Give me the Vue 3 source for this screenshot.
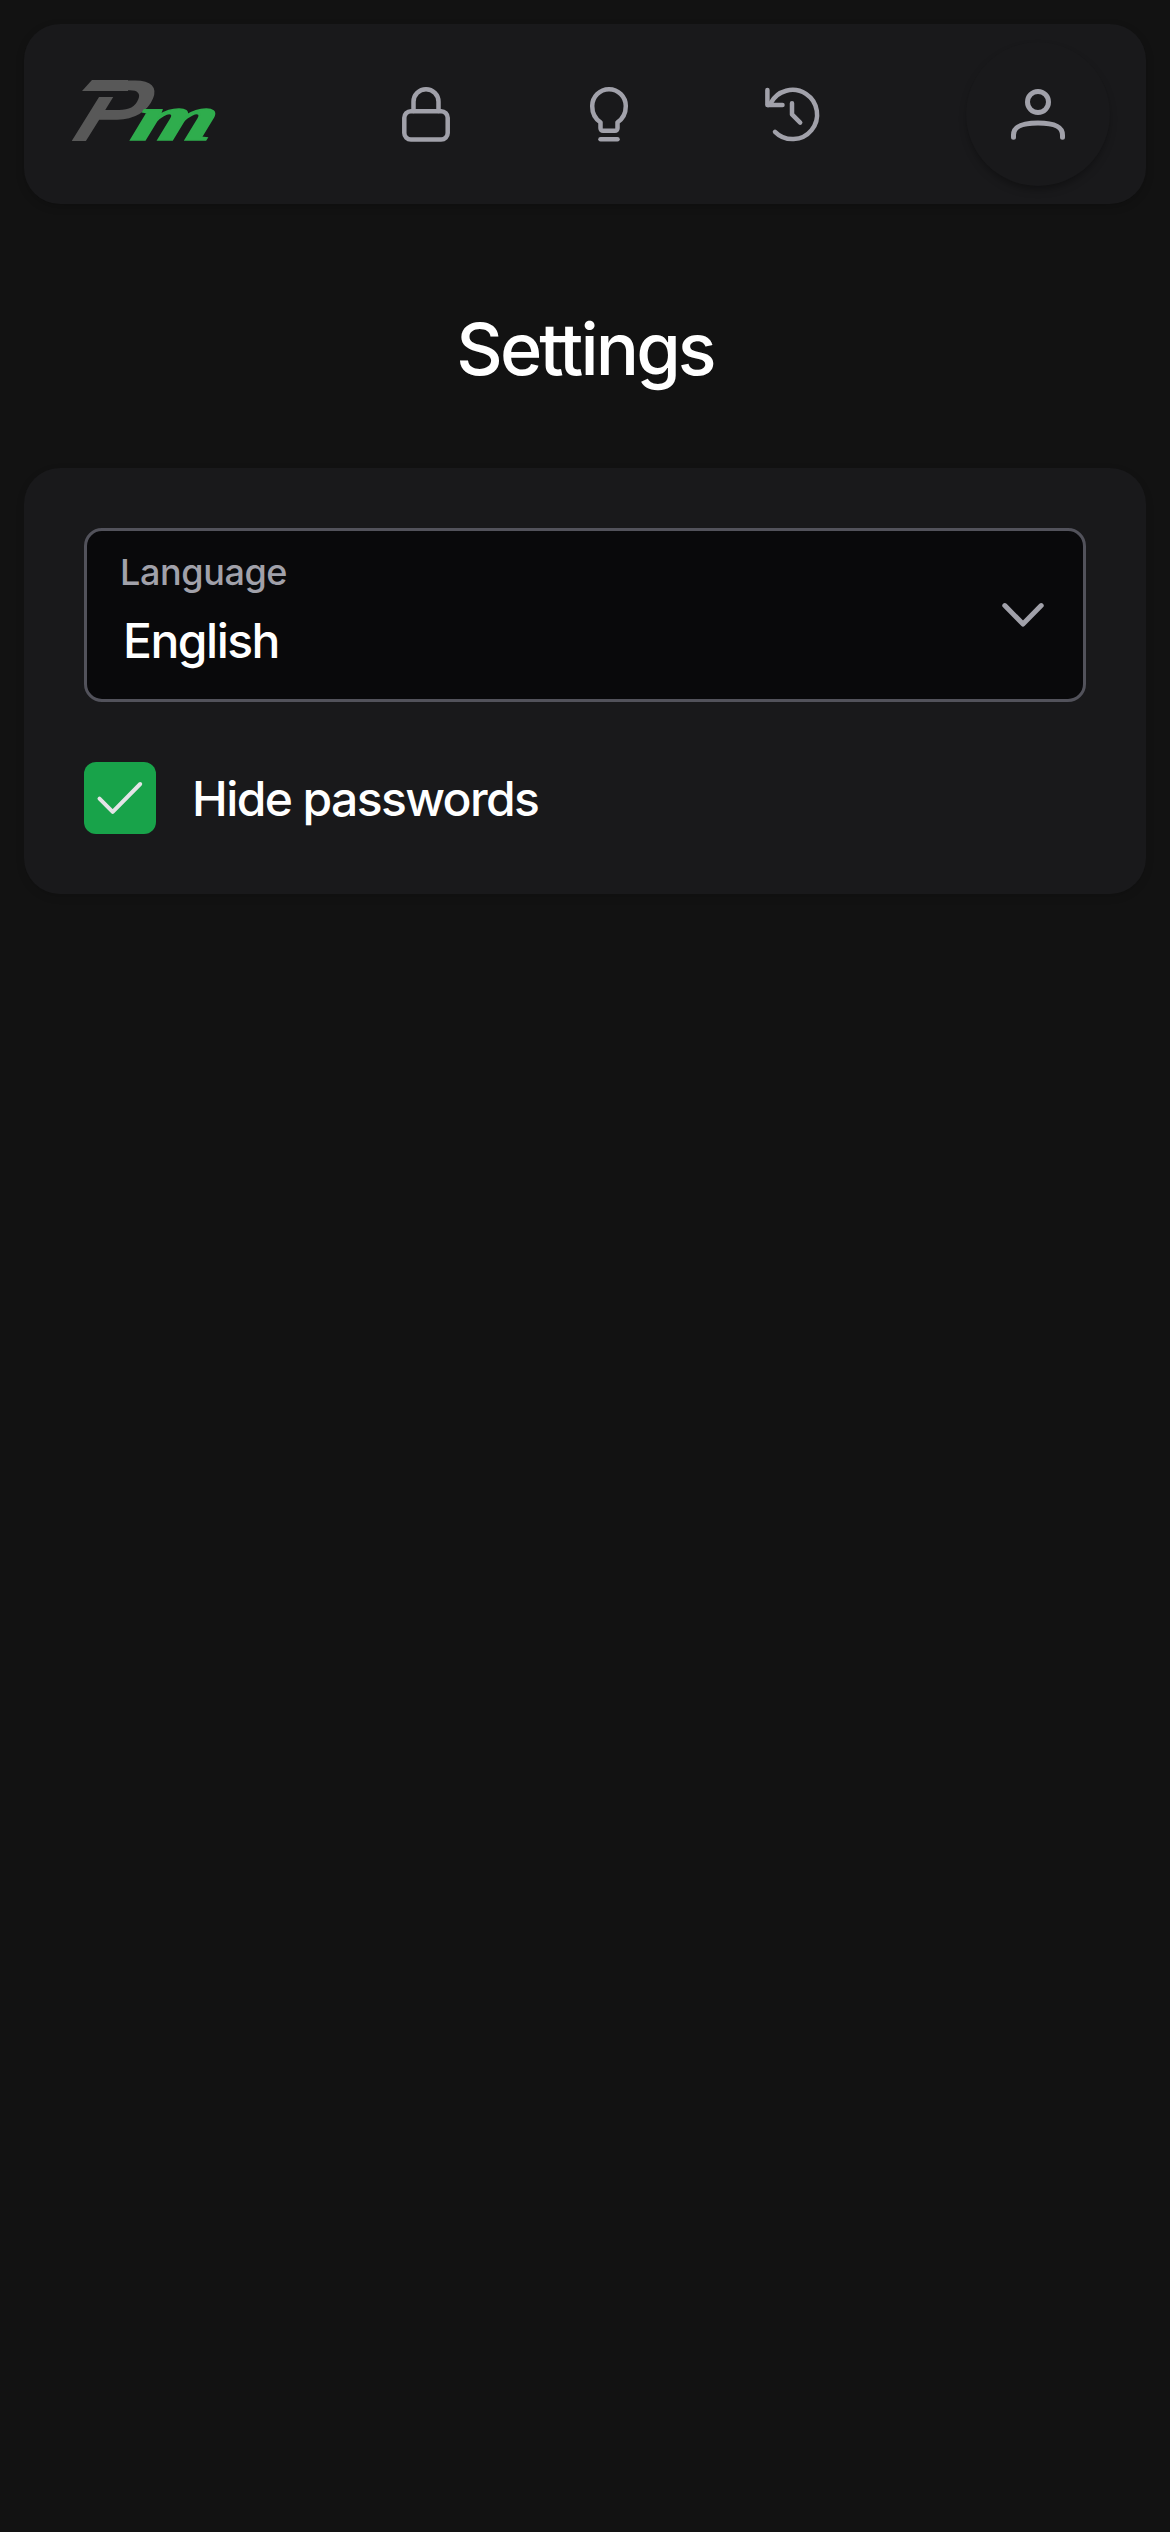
<script setup>
import { ref } from 'vue'

const hidePasswords = ref(true)
const language = ref('English')
</script>

<template>
  <div class="page">
    <header class="navbar">
      <svg class="logo" viewBox="0 0 150 66" aria-label="Pm">
        <text class="logo-p" transform="translate(-2 62.500) skewX(-22) scale(1.120 1)" x="0" y="0">P</text>
        <path class="logo-gap" d="M10 13H53V19H10Z" />
        <path class="logo-bar" d="M20 2H56V13H10Z" />
        <text class="logo-m" transform="translate(57 62) skewX(-18) scale(1.600 1)" x="0" y="0">m</text>
      </svg>
      <nav class="links">
        <svg class="icon" viewBox="0 0 60 60">
          <path d="M17.5 27V17.8a12.5 12.5 0 0 1 25 0V27" />
          <rect x="8.3" y="27.2" width="43.4" height="28.3" rx="6.6" />
        </svg>
        <svg class="icon" viewBox="0 0 60 60">
          <path d="M21.500 38.300C16.500 35 13.200 29 13.200 22a16.800 16.800 0 0 1 33.600 0c0 7-3.300 13-8.300 16.300V44.300a2.500 2.500 0 0 1-2.500 2.500H24a2.500 2.500 0 0 1-2.500-2.500Z" />
          <path d="M21.500 55.300H38.500" />
        </svg>
        <svg class="icon" viewBox="0 0 60 60">
          <path d="M5.400 5.900V21.100H20.500" />
          <path d="M6 21L8.600 19.300A24.600 24.600 0 1 1 13 47.800" />
          <path d="M30 19.200V30.400L38.200 38.600" />
        </svg>
      </nav>
      <div class="avatar">
        <svg class="icon user" viewBox="0 0 60 60">
          <circle cx="30" cy="18" r="10.500" />
          <path d="M5.500 53.200V51C5.500 43 12 38.900 30 38.900S54.500 43 54.500 51V53.200" />
        </svg>
      </div>
    </header>

    <h1 class="title">Settings</h1>

    <main class="card">
      <div class="select">
        <div class="select-text">
          <span class="label">Language</span>
          <span class="value">{{ language }}</span>
        </div>
        <svg class="icon chevron" viewBox="0 0 60 60">
          <path d="M11.800 20.600L30 39L48.200 20.600" />
        </svg>
      </div>
      <div class="option" @click="hidePasswords = !hidePasswords">
        <div class="checkbox">
          <svg v-if="hidePasswords" class="check" viewBox="0 0 72 72">
            <path d="M15.500 36.700L28.700 49.800L56.200 22" />
          </svg>
        </div>
        <span class="option-text">Hide passwords</span>
      </div>
    </main>
  </div>
</template>

<style>
body {
  background: #121212;
}
</style>

<style scoped>
.page {
  box-sizing: border-box;
  min-height: 2532px;
  padding: 24px;
  background: #121212;
  color: #fff;
  font-family: Inter, "Liberation Sans", sans-serif;
}
.navbar {
  box-sizing: border-box;
  display: flex;
  align-items: center;
  height: 180px;
  padding: 0 36px 0 48px;
  border-radius: 36px;
  background: #19191b;
  box-shadow: 0 3px 9px rgba(0, 0, 0, 0.18);
}
.logo {
  width: 150px;
  height: 66px;
  margin-top: -6px;
  overflow: visible;
}
.logo text {
  font-weight: 700;
  font-style: italic;
}
.logo-p {
  font-family: "Liberation Sans", sans-serif;
  font-size: 88px;
  fill: #585858;
}
.logo-bar {
  fill: #585858;
}
.logo-gap {
  fill: #19191b;
}
.logo-m {
  font-family: "Liberation Serif", serif;
  font-size: 66px;
  fill: #2fad4d;
  stroke: #2fad4d;
  stroke-width: 1.5;
}
.links {
  display: flex;
  gap: 123px;
  margin-left: 174px;
}
.icon {
  display: block;
  width: 60px;
  height: 60px;
  fill: none;
  stroke: #a1a1aa;
  stroke-width: 4.5;
  stroke-linecap: round;
  stroke-linejoin: round;
}
.avatar {
  display: flex;
  align-items: center;
  justify-content: center;
  width: 144px;
  height: 144px;
  margin-left: auto;
  border-radius: 50%;
  background: #19191b;
  box-shadow: 0 5px 8px -2px rgba(0, 0, 0, 0.35);
}
.user,
.chevron {
  stroke-width: 5;
}
.title {
  margin: 91px 0 65px;
  font-size: 72px;
  font-weight: 500;
  line-height: 108px;
  letter-spacing: -2.9px;
  text-align: center;
}
.card {
  box-sizing: border-box;
  height: 426px;
  padding: 60px;
  border-radius: 36px;
  background: #19191b;
  box-shadow: 0 3px 9px rgba(0, 0, 0, 0.12);
}
.select {
  box-sizing: border-box;
  display: flex;
  align-items: center;
  justify-content: space-between;
  height: 174px;
  padding: 0 30px 0 33px;
  border: 3px solid #52525b;
  border-radius: 18px;
  background: #09090b;
}
.select-text {
  display: flex;
  flex-direction: column;
  padding-bottom: 9px;
}
.label {
  font-size: 36px;
  font-weight: 450;
  line-height: 54px;
  letter-spacing: -0.4px;
  color: #a1a1aa;
}
.value {
  padding: 6px 0 0 3px;
  font-size: 48px;
  font-weight: 450;
  line-height: 72px;
  letter-spacing: -1.5px;
}
.option {
  display: flex;
  align-items: center;
  gap: 36px;
  height: 72px;
  margin-top: 60px;
}
.checkbox {
  width: 72px;
  height: 72px;
  border-radius: 12px;
  background: #18a34a;
}
.check {
  display: block;
  fill: none;
  stroke: #e4e4e7;
  stroke-width: 4;
  stroke-linecap: round;
  stroke-linejoin: round;
}
.option-text {
  padding-top: 2px;
  font-size: 48px;
  font-weight: 450;
  line-height: 72px;
  letter-spacing: -1.6px;
}
</style>
